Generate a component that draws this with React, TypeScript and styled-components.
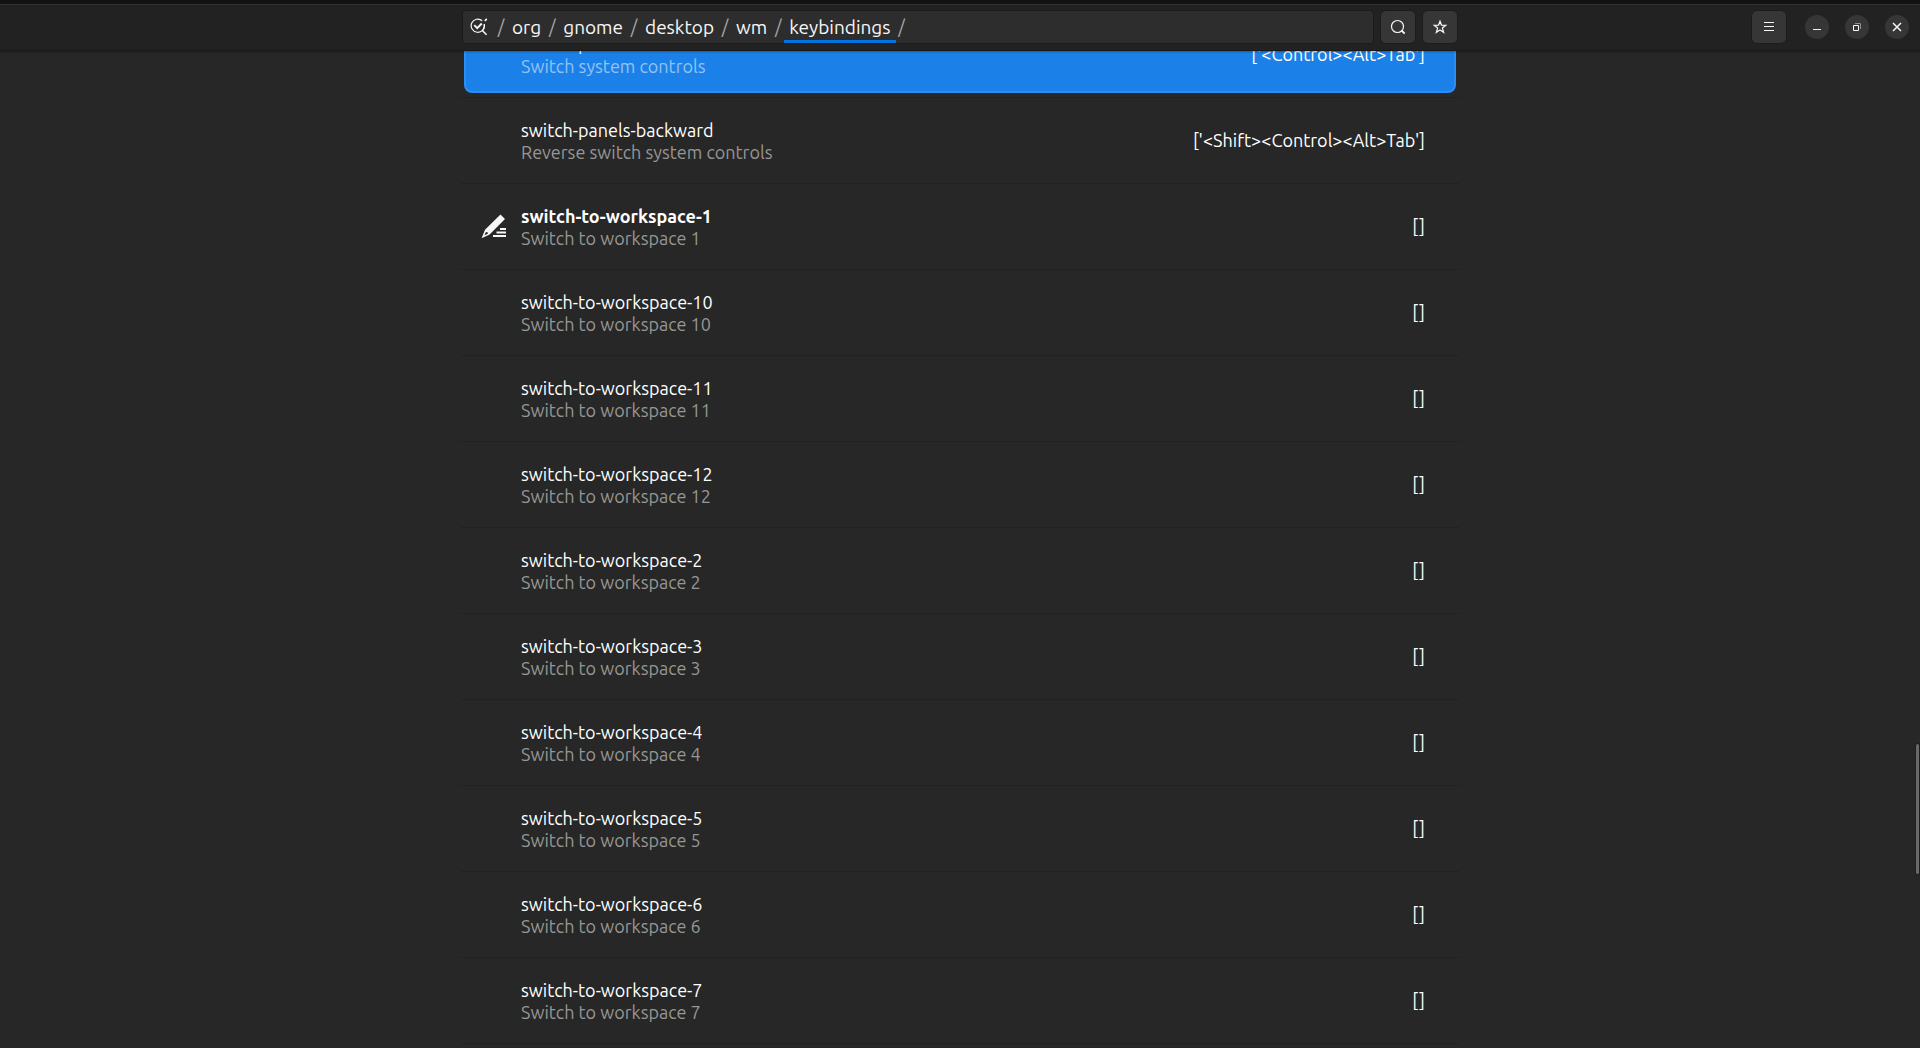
import React, { useLayoutEffect, useRef } from "react";
import styled, { createGlobalStyle, css } from "styled-components";

const GlobalStyle = createGlobalStyle`
  * {
    box-sizing: border-box;
  }
  body {
    margin: 0;
    background: #272727;
    color: #f7f7f7;
    font-family: Ubuntu, "Noto Sans", sans-serif;
    font-size: 18px;
    line-height: 22px;
  }
  button {
    font: inherit;
    color: inherit;
  }
`;

const Window = styled.div`
  display: flex;
  flex-direction: column;
  height: 100vh;
  overflow: hidden;
`;

const HeaderBar = styled.header`
  flex: none;
  display: grid;
  grid-template-columns: 1fr minmax(0, 996px) 1fr;
  align-items: center;
  height: 51px;
  background: #222222;
  border-top: 4px solid #121212;
  border-bottom: 1px solid #191919;
  box-shadow: inset 0 1px #303030, 0 1px 2px rgba(0, 0, 0, 0.3);
  position: relative;
  z-index: 1;
`;

const PathArea = styled.div`
  grid-column: 2;
  display: flex;
  gap: 6px;
`;

const PathBar = styled.nav`
  flex: 1;
  display: flex;
  align-items: stretch;
  height: 34px;
  padding: 0 7px;
  background: #2d2d2d;
  border: 1px solid #1b1b1b;
  border-radius: 4px;
  color: #f7f7f7;
`;

const RootButton = styled.button`
  display: flex;
  align-items: center;
  width: 25px;
  padding: 0;
  border: 0;
  background: none;
`;

const Slash = styled.span`
  width: 12px;
  text-align: center;
  line-height: 32px;
  color: #a8a8a8;
`;

const PathLink = styled.a<{ $current?: boolean }>`
  padding: 0 5px;
  font-size: 19px;
  line-height: 32px;
  color: inherit;
  text-decoration: none;
  ${(p) =>
    p.$current &&
    css`
      box-shadow: inset 0 -3px #0073e5;
    `}
`;

const IconButton = styled.button`
  display: grid;
  place-items: center;
  width: 36px;
  height: 34px;
  padding: 0;
  background: #363636;
  border: 1px solid #1b1b1b;
  border-radius: 6px;
`;

const WindowArea = styled.div`
  display: flex;
  align-items: center;
  justify-content: flex-end;
  gap: 18px;
  padding-right: 11px;
`;

const WindowControls = styled.div`
  display: flex;
  gap: 16px;
`;

const RoundButton = styled.button`
  display: grid;
  place-items: center;
  width: 24px;
  height: 24px;
  padding: 0;
  border: 0;
  border-radius: 50%;
  background: #363636;
`;

const Body = styled.div`
  flex: 1;
  min-height: 0;
  position: relative;
`;

const Scroller = styled.main`
  height: 100%;
  overflow-y: auto;
  scrollbar-width: none;
`;

const ScrollThumb = styled.div`
  position: absolute;
  right: 1px;
  top: 69.5%;
  width: 3px;
  height: 13%;
  border-radius: 2px;
  background: #6b6a68;
  box-shadow: 0 0 0 1px #1f1f1f;
`;

const KeyList = styled.ul`
  max-width: 1000px;
  margin: 0 auto;
  padding: 0 0 8px;
  list-style: none;
`;

const KeyItem = styled.li`
  padding: 4px;
  border-bottom: 1px solid #222222;
`;

const KeyRow = styled.div<{ $selected?: boolean }>`
  display: flex;
  align-items: center;
  height: 77px;
  padding: 0 29px 0 15px;
  border: 2px solid transparent;
  border-radius: 8px;
  ${(p) =>
    p.$selected &&
    css`
      background: #1b81e9;
      border-color: #2a8dfa;
    `}
`;

const IconSlot = styled.div`
  display: flex;
  width: 40px;
`;

const Names = styled.div`
  flex: 1;
`;

const KeyName = styled.div<{ $bold?: boolean }>`
  color: #ffffff;
  font-weight: ${(p) => (p.$bold ? 700 : 400)};
`;

const Summary = styled.div<{ $selected?: boolean }>`
  color: ${(p) => (p.$selected ? "#92c3f4" : "#969694")};
`;

const Value = styled.div`
  padding-bottom: 2px;
  color: #ffffff;
`;

type Key = {
  name: string;
  summary: string;
  value: string;
  selected?: boolean;
  modified?: boolean;
};

const workspaces = ["1", "10", "11", "12", "2", "3", "4", "5", "6", "7"];

const keys: Key[] = [
  {
    name: "switch-panels",
    summary: "Switch system controls",
    value: "['<Control><Alt>Tab']",
    selected: true,
  },
  {
    name: "switch-panels-backward",
    summary: "Reverse switch system controls",
    value: "['<Shift><Control><Alt>Tab']",
  },
  ...workspaces.map((n) => ({
    name: `switch-to-workspace-${n}`,
    summary: `Switch to workspace ${n}`,
    value: "[]",
    modified: n === "1",
  })),
];

const path = ["org", "gnome", "desktop", "wm", "keybindings"];

const SCROLL_OFFSET = 39;

const EditedIcon = () => (
  <svg width="25" height="25" viewBox="0 0 25 25" fill="#f7f7f7" aria-hidden="true">
    <path
      fillRule="evenodd"
      d="M19.500 .600 24 5.100 8.600 20.600.6 24.200 4 15.800ZM4.900 18l-1.400 3.300 3.300-1.500-.2-1.600Z"
    />
    <path d="M19 14h6v2h-6zM15.500 17.500h9.500v2h-9.500zM12 21h13v2H12z" />
  </svg>
);

const RootIcon = () => (
  <svg width="18" height="18" viewBox="0 0 18 18" fill="none" stroke="#f7f7f7" aria-hidden="true">
    <path strokeWidth="1.200" d="M12.200 2.800A6.600 6.600 0 1 0 14.200 6.200" />
    <path strokeWidth="1.200" d="M14.200 6.200a6.600 6.600 0 0 1-1.400 6" />
    <path strokeWidth="1.900" d="M4.300 7.200 7.200 10.200 11.800 5.500" />
    <path strokeWidth="1.600" d="M14.800 2.900 16.800 .9M12.300 12.500l4.300 4.300" />
  </svg>
);

const SearchIcon = () => (
  <svg width="16" height="16" viewBox="0 0 16 16" fill="none" stroke="#f7f7f7" aria-hidden="true">
    <circle cx="7.500" cy="7.500" r="6" strokeWidth="1.200" />
    <path strokeWidth="1.800" d="m11.500 11.500 3.200 3.200" />
  </svg>
);

const StarIcon = () => (
  <svg width="16" height="16" viewBox="0 0 16 16" fill="none" stroke="#f7f7f7" aria-hidden="true">
    <path
      strokeWidth="1.300"
      d="M8 2.300 9.500 6.200l4.200.2-3.300 2.700 1.200 4.200L8 11l-3.600 2.300 1.200-4.200L2.300 6.400l4.200-.2Z"
    />
  </svg>
);

const MenuIcon = () => (
  <svg width="16" height="16" viewBox="0 0 16 16" fill="#f7f7f7" aria-hidden="true">
    <path d="M3 3h10v1H3zM3 7h10v1H3zM3 11h10v1H3z" />
  </svg>
);

const MinimizeIcon = () => (
  <svg width="16" height="16" viewBox="0 0 16 16" fill="#f7f7f7" aria-hidden="true">
    <path d="M4 10h8v1H4z" />
  </svg>
);

const RestoreIcon = () => (
  <svg width="16" height="16" viewBox="0 0 16 16" fill="none" aria-hidden="true">
    <path stroke="#8f8f8f" d="M6 4.500h5.500V10" />
    <path stroke="#f7f7f7" d="M4.500 6.500h5v5h-5z" />
  </svg>
);

const CloseIcon = () => (
  <svg width="16" height="16" viewBox="0 0 16 16" fill="none" aria-hidden="true">
    <path stroke="#f7f7f7" strokeWidth="1.500" d="m4 4 8 8M12 4l-8 8" />
  </svg>
);

export default function App() {
  const scroller = useRef<HTMLElement>(null);

  useLayoutEffect(() => {
    if (scroller.current) scroller.current.scrollTop = SCROLL_OFFSET;
  }, []);

  return (
    <Window>
      <GlobalStyle />
      <HeaderBar>
        <PathArea>
          <PathBar aria-label="Path">
            <RootButton aria-label="Root">
              <RootIcon />
            </RootButton>
            <Slash>/</Slash>
            {path.map((part, i) => (
              <React.Fragment key={part}>
                <PathLink href="#" $current={i === path.length - 1}>
                  {part}
                </PathLink>
                <Slash>/</Slash>
              </React.Fragment>
            ))}
          </PathBar>
          <IconButton aria-label="Search">
            <SearchIcon />
          </IconButton>
          <IconButton aria-label="Bookmarks">
            <StarIcon />
          </IconButton>
        </PathArea>
        <WindowArea>
          <IconButton aria-label="Menu">
            <MenuIcon />
          </IconButton>
          <WindowControls>
            <RoundButton aria-label="Minimize">
              <MinimizeIcon />
            </RoundButton>
            <RoundButton aria-label="Restore">
              <RestoreIcon />
            </RoundButton>
            <RoundButton aria-label="Close">
              <CloseIcon />
            </RoundButton>
          </WindowControls>
        </WindowArea>
      </HeaderBar>
      <Body>
        <Scroller ref={scroller}>
          <KeyList>
            {keys.map((key) => (
              <KeyItem key={key.name}>
                <KeyRow $selected={key.selected}>
                  <IconSlot>{key.modified && <EditedIcon />}</IconSlot>
                  <Names>
                    <KeyName $bold={key.modified}>{key.name}</KeyName>
                    <Summary $selected={key.selected}>{key.summary}</Summary>
                  </Names>
                  <Value>{key.value}</Value>
                </KeyRow>
              </KeyItem>
            ))}
          </KeyList>
        </Scroller>
        <ScrollThumb />
      </Body>
    </Window>
  );
}
